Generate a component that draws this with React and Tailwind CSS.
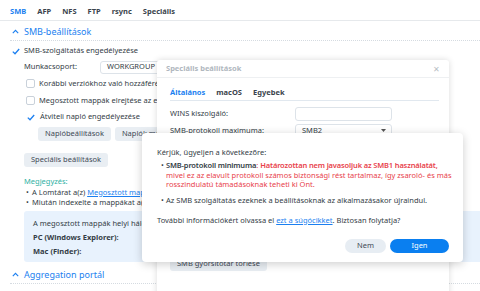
import React from 'react';

const Check = () => (
    <svg width="8" height="7" viewBox="0 0 8 7" className="shrink-0">
        <path d="M0.8 3.6 L3 5.8 L7.2 1" fill="none" stroke="#1b7ff0" strokeWidth="1.3" />
    </svg>
);

const Box = () => <span className="w-[9px] h-[9px] rounded-[2px] border border-[#c9d1da] bg-white shrink-0"></span>;

const Chevron = () => (
    <svg width="7" height="5" viewBox="0 0 7 5" className="shrink-0">
        <path d="M0.8 4.2 L3.5 1.4 L6.2 4.2" fill="none" stroke="#1b7ff0" strokeWidth="1.1" />
    </svg>
);

const GrayBtn = ({ children }) => (
    <span className="h-[14px] px-[7px] flex items-center rounded-[3px] bg-[#e9eef3] text-[#3f4a55]">{children}</span>
);

const Bullet = ({ children }) => (
    <div className="flex whitespace-nowrap">
        <span className="w-[8px] pl-[2px] shrink-0">•</span>
        <span>{children}</span>
    </div>
);

const App = () => {
    return (
        <div className="relative w-[480px] h-[291px] overflow-hidden bg-white text-[#343d46] text-[7.5px] font-['Noto_Sans',sans-serif]">
            {/* Tabs */}
            <div className="h-[21px] border-b border-[#e6e9ec] flex items-center pl-[10px] pt-[4px] gap-[11px] font-bold text-[#3a434c]">
                <span className="text-[#1b7ff0]">SMB</span>
                <span>AFP</span>
                <span>NFS</span>
                <span>FTP</span>
                <span>rsync</span>
                <span>Speciális</span>
            </div>

            {/* SMB section */}
            <div className="ml-[10px] h-[20px] flex items-center gap-[5px] pl-[2px] pt-[2px] border-b border-dotted border-[#d5dbe1] text-[#1b7ff0] text-[9px]">
                <Chevron />
                <span>SMB-beállítások</span>
            </div>

            <div className="pl-[12px]">
                <div className="h-[19px] flex items-center gap-[4px] pt-[1px]">
                    <Check />
                    <span>SMB-szolgáltatás engedélyezése</span>
                </div>
                <div className="h-[14px] flex items-center pl-[12px]">
                    <span className="w-[76px]">Munkacsoport:</span>
                    <span className="h-[13px] w-[70px] border border-[#dde3e9] rounded-[3px] flex items-center pl-[6px]">WORKGROUP</span>
                </div>
                <div className="h-[17px] mt-[1px] flex items-center gap-[4px] pl-[14px]">
                    <Box />
                    <span className="whitespace-nowrap">Korábbi verziókhoz való hozzáférés</span>
                </div>
                <div className="h-[17px] flex items-center gap-[4px] pl-[14px]">
                    <Box />
                    <span className="whitespace-nowrap">Megosztott mappák elrejtése az engedéllyel nem rendelkező felhasználók elől</span>
                </div>
                <div className="h-[16px] flex items-center gap-[5px] pl-[15px]">
                    <Check />
                    <span>Átviteli napló engedélyezése</span>
                </div>
                <div className="flex gap-[4px] pl-[26px] mt-[2px]">
                    <GrayBtn>Naplóbeállítások</GrayBtn>
                    <GrayBtn>Naplók megtekintése</GrayBtn>
                </div>
                <div className="flex pl-[12px] mt-[12px]">
                    <GrayBtn>Speciális beállítások</GrayBtn>
                </div>
                <div className="pl-[12px] mt-[9px] leading-[10.5px]">
                    <div className="text-[#2fb1a4]">Megjegyzés:</div>
                    <Bullet>A Lomtárat a(z) <span className="text-[#1b7ff0] underline">Megosztott mappa</span> területen engedélyezheti.</Bullet>
                    <Bullet>Miután indexelte a mappákat a(z) Universal Search szolgáltatásban, a mappák tartalmában kereshet.</Bullet>
                </div>
                <div className="ml-[12px] mt-[3px] h-[51px] bg-[#e8f2fd] rounded-l-[3px] pl-[9px] pt-[5px] leading-[14px]">
                    <div>A megosztott mappák helyi hálózati elérése:</div>
                    <div className="font-bold">PC (Windows Explorer):</div>
                    <div className="font-bold">Mac (Finder):</div>
                </div>
            </div>

            <div className="ml-[10px] mt-[5px] h-[17px] flex items-center gap-[5px] pl-[2px] border-b border-dotted border-[#d5dbe1] text-[#1b7ff0] text-[9px]">
                <Chevron />
                <span>Aggregation portál</span>
            </div>

            {/* Speciális beállítások window */}
            <div className="absolute left-[157px] top-[60px] w-[292px] h-[250px] bg-white rounded-t-[3px] shadow-[0_0_6px_rgba(0,0,0,0.15)]">
                <div className="h-[18px] border-b border-[#eef0f2] flex items-center justify-between pl-[9px] pr-[9px]">
                    <span className="font-bold text-[#b0b7be]">Speciális beállítások</span>
                    <span className="text-[#b8bec4] text-[8px]">✕</span>
                </div>
                <div className="pl-[13px] pr-[10px]">
                    <div className="h-[23px] flex items-end gap-[11px] border-b border-[#e1e8ef] pb-[2px] font-bold text-[#3a434c]">
                        <span className="text-[#1b7ff0]">Általános</span>
                        <span>macOS</span>
                        <span>Egyebek</span>
                    </div>
                    <div className="flex items-center mt-[5px] h-[15px]">
                        <span className="w-[125px]">WINS kiszolgáló:</span>
                        <span className="h-[14px] w-[97px] border border-[#dde3e9] rounded-[3px]"></span>
                    </div>
                    <div className="flex items-center mt-[2px] h-[15px]">
                        <span className="w-[125px]">SMB-protokoll maximuma:</span>
                        <span className="h-[14px] w-[97px] border border-[#dde3e9] rounded-[3px] flex items-center justify-between pl-[6px] pr-[5px]">
                            SMB2
                            <svg width="5" height="3" viewBox="0 0 5 3"><path d="M0 0 L5 0 L2.5 3 Z" fill="#555" /></svg>
                        </span>
                    </div>
                    <div className="flex mt-[119px]">
                        <GrayBtn>SMB gyorsítótár törlése</GrayBtn>
                    </div>
                </div>
            </div>

            {/* Alert */}
            <div className="absolute left-[142px] top-[133px] w-[321px] h-[129px] bg-white rounded-[4px] shadow-[0_2px_10px_rgba(0,0,0,0.2)] pl-[15px] pr-[10px] pt-[14px] flex flex-col">
                <div className="leading-[10px]">Kérjük, ügyeljen a következőre:</div>
                <div className="flex mt-[4px] leading-[9.5px]">
                    <span className="w-[9px] pl-[4px] shrink-0">•</span>
                    <span className="text-[#e8414b]">
                        <span className="font-semibold tracking-[-0.15px] text-[#343d46]">SMB-protokoll minimuma</span>: <span className="font-semibold tracking-[-0.15px]">Határozottan nem javasoljuk az SMB1 használatát,</span> mivel ez az elavult protokoll számos biztonsági rést tartalmaz, így zsaroló- és más rosszindulatú támadásoknak teheti ki Önt.
                    </span>
                </div>
                <div className="flex mt-[5px] leading-[10px]">
                    <span className="w-[9px] pl-[4px] shrink-0">•</span>
                    <span>Az SMB szolgáltatás ezeknek a beállításoknak az alkalmazásakor újraindul.</span>
                </div>
                <div className="mt-[10px] leading-[10px]">
                    További információkért olvassa el <span className="text-[#1b7ff0] underline">ezt a súgócikket</span>. Biztosan folytatja?
                </div>
                <div className="mt-auto mb-[9px] mr-[4px] flex justify-end gap-[4px]">
                    <span className="w-[41px] h-[14px] rounded-full bg-[#e7edf3] flex items-center justify-center text-[#3f4a55]">Nem</span>
                    <span className="w-[59px] h-[14px] rounded-full bg-[#0a7ff0] flex items-center justify-center text-white">Igen</span>
                </div>
            </div>
        </div>
    );
};

export default App;
